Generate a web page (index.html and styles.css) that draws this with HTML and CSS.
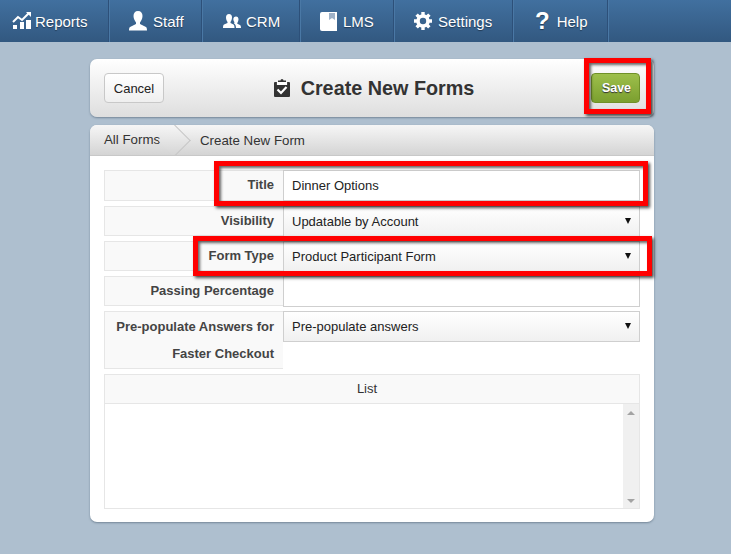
FILE: index.html
```html
<!DOCTYPE html>
<html lang="en">
<head>
  <meta charset="UTF-8" />
  <meta name="viewport" content="width=device-width, initial-scale=1.0"/>
  <title>Create New Forms</title>
  <link rel="stylesheet" href="styles.css">
</head>
<body>

  <nav class="topnav">
    <a class="nav-item nav-reports" href="#">
      <svg width="20" height="18" viewBox="0 0 20 18"><path d="M1 17v-4h4v4zM8 17v-7h4v7zM14 17V8h5v9z" fill="#fff"/><path d="M1 10l5-5 4 3 7-7" fill="none" stroke="#fff" stroke-width="2"/><path d="M14 0h5v5z" fill="#fff"/></svg>
      Reports
    </a>
    <a class="nav-item nav-staff" href="#">
      <svg width="18" height="20" viewBox="0 0 18 20"><path d="M9 0c3 0 4.500 2 4.500 5S12 10 11 11.500v1.500l6 3c.7.400 1 1.500 1 3.500H0c0-2 .3-3.100 1-3.500l6-3v-1.500C6 10 4.500 8 4.500 5S6 0 9 0z" fill="#fff"/></svg>
      Staff
    </a>
    <a class="nav-item nav-crm" href="#">
      <svg width="18" height="14" viewBox="0 0 18 14"><path d="M6 0c2 0 3 1.400 3 3.400S8 7 7.500 8v1l3 1.500c.8.400 1 2 1 3.500H0c0-1.500.2-3.100 1-3.500L4.500 9V8C4 7 3 5.400 3 3.400S4 0 6 0z" fill="#fff"/><path d="M13 2.500c1.700 0 2.500 1.200 2.500 2.800S14.800 8 14.300 9v.7l2.700 1.200c.7.300 1 1.600 1 3.100h-5c0-2-.5-3.800-2-4.600.5-.6.500-1 .3-1.400-.5-.8-1-1.800-1-2.700 0-1.600 1-2.800 2.700-2.800z" fill="#fff"/></svg>
      CRM
    </a>
    <a class="nav-item nav-lms" href="#">
      <svg width="17" height="19" viewBox="0 0 17 19"><path d="M2 0h15v19H2a2 2 0 0 1-2-2V2a2 2 0 0 1 2-2z" fill="#fff"/><path d="M9 1h6v7l-3-2-3 2z" fill="#9fb2c8"/></svg>
      LMS
    </a>
    <a class="nav-item nav-settings" href="#">
      <svg width="18" height="18" viewBox="0 0 18 18"><circle cx="9" cy="9" r="5" fill="none" stroke="#fff" stroke-width="3.600"/><path d="M9 0v18M0 9h18M2.600 2.600l12.800 12.800M15.400 2.600L2.600 15.400" stroke="#fff" stroke-width="3.400" stroke-dasharray="3.400 11.200"/></svg>
      Settings
    </a>
    <a class="nav-item nav-help" href="#">
      <span class="help-mark">?</span>
      Help
    </a>
  </nav>

  <main class="page">
    <header class="title-bar">
      <button class="btn-cancel">Cancel</button>
      <h1>
        <svg width="16" height="18" viewBox="0 0 16 18"><path d="M1 3h3V1.500h2.500a1.500 1.500 0 0 1 3 0H12V3h3a1 1 0 0 1 1 1v13a1 1 0 0 1-1 1H1a1 1 0 0 1-1-1V4a1 1 0 0 1 1-1z" fill="#333"/><path d="M4 5h8v-1H4zM3.500 10.500l3.500 3.500 5.500-6" fill="none" stroke="#fff" stroke-width="2.200"/></svg>
        Create New Forms
      </h1>
      <button class="btn-save">Save</button>
    </header>

    <section class="form-card">
      <div class="crumbs">
        <span class="crumb crumb-first">All Forms</span>
        <span class="crumb">Create New Form</span>
      </div>

      <form class="form-body">
        <div class="row row-title">
          <label>Title</label>
          <div class="field field-input">Dinner Options</div>
        </div>
        <div class="row">
          <label>Visibility</label>
          <div class="field field-select">Updatable by Account</div>
        </div>
        <div class="row">
          <label>Form Type</label>
          <div class="field field-select">Product Participant Form</div>
        </div>
        <div class="row">
          <label>Passing Percentage</label>
          <div class="field field-input"></div>
        </div>
        <div class="row row-tall">
          <label>Pre-populate Answers for Faster Checkout</label>
          <div class="field field-select">Pre-populate answers</div>
        </div>
        <div class="list-box">
          <div class="list-head">List</div>
          <div class="list-body">
            <div class="scroll">
              <span class="scroll-up"></span>
              <span class="scroll-down"></span>
            </div>
          </div>
        </div>
      </form>
    </section>
  </main>

  <div class="mark mark-save"></div>
  <div class="mark mark-title"></div>
  <div class="mark mark-type"></div>

</body>
</html>
```

FILE: styles.css
```css
* {
  box-sizing: border-box;
}

body {
  font-family: 'Liberation Sans', Arial, sans-serif;
  background-color: #aebfcf;
  color: #333;
  margin: 0;
  height: 554px;
  overflow: hidden;
}

.topnav {
  display: flex;
  height: 42px;
  background: linear-gradient(#41709f, #325880);
}

.nav-item {
  display: flex;
  align-items: center;
  gap: 6px;
  color: #fff;
  text-decoration: none;
  font-size: 15px;
  text-shadow: 0 1px 1px rgba(0, 0, 0, 0.4);
  border-right: 1px solid #2d5079;
  box-shadow: 1px 0 0 #4a78a5;
}

.nav-reports { width: 109px; padding-left: 12px; gap: 3px; }
.nav-staff { width: 93px; padding-left: 20px; }
.nav-crm { width: 98px; padding-left: 21px; gap: 5px; }
.nav-lms { width: 94px; padding-left: 20px; }
.nav-settings { width: 119px; padding-left: 20px; }
.nav-help { width: 95px; padding-left: 22px; gap: 7px; }

.help-mark {
  font-size: 24px;
  font-weight: bold;
  line-height: 1;
}

.page {
  width: 564px;
  margin: 17px 0 0 90px;
}

.title-bar {
  display: flex;
  align-items: center;
  justify-content: space-between;
  height: 58px;
  padding: 0 14px;
  background: linear-gradient(#fff, #dedede);
  border-radius: 7px;
  box-shadow: 0 1px 2px rgba(60, 80, 100, 0.5);
}

.title-bar h1 {
  display: flex;
  align-items: center;
  gap: 11px;
  margin: 0 7px 0 0;
  font-size: 19.8px;
  font-weight: bold;
  color: #333;
}

.btn-cancel {
  width: 60px;
  height: 30px;
  padding: 0;
  font-family: inherit;
  font-size: 13px;
  color: #222;
  background: linear-gradient(#fff, #efefef);
  border: 1px solid #c8c8c8;
  border-radius: 4px;
}

.btn-save {
  width: 49px;
  height: 30px;
  padding: 0 0 0 2px;
  font-family: inherit;
  font-size: 12.5px;
  font-weight: bold;
  color: #fff;
  text-shadow: 0 1px 1px #333;
  background: linear-gradient(#9dbf4b, #7b9f2f);
  border: 1px solid #6f9028;
  border-radius: 4px;
}

.form-card {
  height: 397px;
  margin-top: 8px;
  background-color: #fff;
  border-radius: 7px;
  box-shadow: 0 1px 2px rgba(60, 80, 100, 0.5);
}

.crumbs {
  display: flex;
  align-items: center;
  height: 31px;
  background: linear-gradient(#f6f6f6, #d4d4d4);
  border-bottom: 1px solid #c8c8c8;
  border-radius: 7px 7px 0 0;
  font-size: 13.3px;
  color: #333;
  overflow: hidden;
}

.crumb {
  padding-left: 14px;
}

.crumb-first {
  position: relative;
  width: 96px;
  height: 100%;
  line-height: 30px;
}

/* chevron between the two crumbs */
.crumb-first::after {
  content: "";
  position: absolute;
  top: 4px;
  right: 0;
  width: 22px;
  height: 22px;
  transform: rotate(45deg);
  border-top: 1px solid #c6c6c6;
  border-right: 1px solid #c6c6c6;
  background: linear-gradient(135deg, #f6f6f6, #d4d4d4);
}

.form-body {
  display: flex;
  flex-direction: column;
  gap: 5px;
  padding: 14px 14px 0;
}

.row {
  display: flex;
  height: 30px;
}

.row-title {
  height: 31px;
}

.row-tall {
  height: 58px;
}

.row label {
  width: 179px;
  padding: 0 9px 0 4px;
  font-size: 13px;
  line-height: 28px;
  font-weight: bold;
  text-align: right;
  color: #444;
  background-color: #f9f9f9;
  border: 1px solid #e6e6e6;
  border-right: 0;
}

.row-tall label {
  line-height: 27px;
  padding-top: 1px;
}

.field {
  flex: 1;
  height: 31px;
  padding-left: 8px;
  font-size: 13px;
  line-height: 29px;
  color: #222;
  border: 1px solid #cfcfcf;
}

.field-input {
  background-color: #fff;
}

.field-select {
  position: relative;
  background: linear-gradient(#fff, #f0f0f0);
}

.field-select::after {
  content: "";
  position: absolute;
  top: 11px;
  right: 8px;
  border-left: 3px solid transparent;
  border-right: 3px solid transparent;
  border-top: 6px solid #111;
}

.list-box {
  height: 135px;
  border: 1px solid #e6e6e6;
}

.list-head {
  height: 29px;
  padding-right: 10px;
  font-size: 13px;
  line-height: 28px;
  text-align: center;
  color: #333;
  background-color: #f9f9f9;
  border-bottom: 1px solid #e6e6e6;
}

.list-body {
  display: flex;
  justify-content: flex-end;
  height: 104px;
}

.scroll {
  display: flex;
  flex-direction: column;
  justify-content: space-between;
  align-items: center;
  width: 16px;
  padding: 7px 0 5px;
  background-color: #f0f0f0;
}

.scroll-up {
  border-left: 4px solid transparent;
  border-right: 4px solid transparent;
  border-bottom: 4px solid #a3a3a3;
}

.scroll-down {
  border-left: 4px solid transparent;
  border-right: 4px solid transparent;
  border-top: 4px solid #a3a3a3;
}

/* red annotation boxes drawn over the screenshot */
.mark {
  position: absolute;
  border: 5px solid #f00;
  box-shadow: 2px 2px 3px rgba(0, 0, 0, 0.7), inset 2px 2px 3px rgba(0, 0, 0, 0.6);
}

.mark-save { left: 584px; top: 58px; width: 67px; height: 56px; }
.mark-title { left: 214px; top: 161px; width: 434px; height: 45px; }
.mark-type { left: 193px; top: 236px; width: 459px; height: 40px; }
```
